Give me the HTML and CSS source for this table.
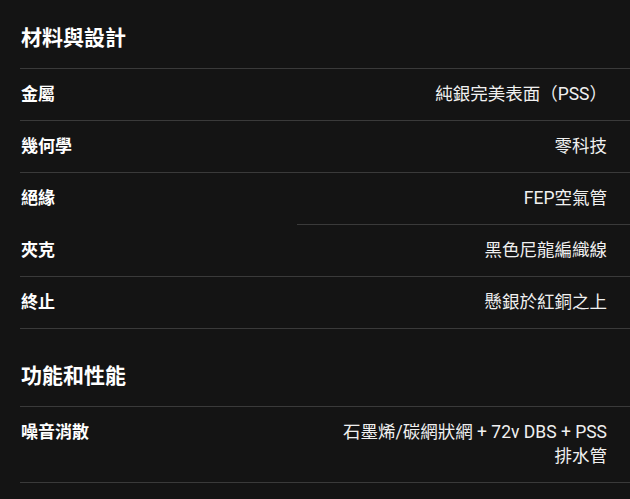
FILE: index.html
```html
<!DOCTYPE html>
<html lang="zh-Hant">
<head>
<meta charset="utf-8">
<link rel="stylesheet" href="styles.css">
</head>
<body>
<div class="specs">
  <section class="group">
    <h2 class="group-title">材料與設計</h2>
    <div class="rows">
      <div class="label">金屬</div><div class="value">純銀完美表面（PSS）</div>
      <div class="label">幾何學</div><div class="value">零科技</div>
      <div class="label no-border">絕緣</div><div class="value">FEP空氣管</div>
      <div class="label">夾克</div><div class="value">黑色尼龍編織線</div>
      <div class="label">終止</div><div class="value">懸銀於紅銅之上</div>
    </div>
  </section>
  <section class="group second">
    <h2 class="group-title">功能和性能</h2>
    <div class="rows">
      <div class="label">噪音消散</div><div class="value">石墨烯/碳網狀網 + 72v DBS + PSS<br>排水管</div>
    </div>
  </section>
</div>
</body>
</html>
```
FILE: styles.css
```css
html, body {
  margin: 0;
  padding: 0;
  background: #141414;
}
body {
  font-family: Roboto, "Noto Sans CJK TC", sans-serif;
  color: #f0f0f0;
}
.specs {
  padding-left: 20px;
}
.group.second {
  margin-top: 9px;
}
.group-title {
  margin: 0;
  padding: 26px 0 18px 1px;
  font-size: 21px;
  line-height: 24px;
  font-weight: 700;
  color: #ffffff;
  border-bottom: 1px solid #3a3a3a;
}
.rows {
  display: grid;
  grid-template-columns: 277px 1fr;
}
.label, .value {
  padding: 13px 0 14px;
  font-size: 17px;
  line-height: 24px;
  border-bottom: 1px solid #3a3a3a;
}
.label {
  font-weight: 700;
  color: #ffffff;
  padding-left: 1px;
}
.label.no-border {
  border-bottom-color: transparent;
}
.value {
  font-size: 17.5px;
  text-align: right;
  padding-right: 23px;
}
```
